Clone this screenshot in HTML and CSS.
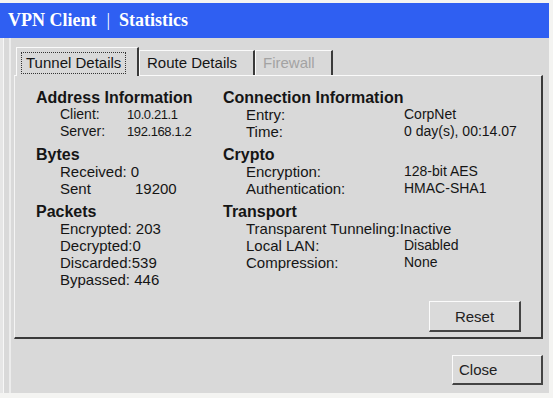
FILE: index.html
```html
<!DOCTYPE html>
<html>
<head>
<meta charset="utf-8">
<link rel="stylesheet" href="styles.css">
</head>
<body>
<div class="window">
  <div class="titlebar"><span>VPN Client</span><span class="sep">|</span><span>Statistics</span></div>
  <div class="client">
    <div class="tabs">
      <div class="tab active"><span class="focus">Tunnel Details</span></div>
      <div class="tab t2">Route Details</div>
      <div class="tab t3 disabled">Firewall</div>
    </div>
    <div class="panel">
      <div class="cols">
        <div class="col left">
          <div class="group">
            <div class="head">Address Information</div>
            <div class="row"><span class="lbl la small">Client:</span><span class="ip">10.0.21.1</span></div>
            <div class="row"><span class="lbl la small">Server:</span><span class="ip">192.168.1.2</span></div>
          </div>
          <div class="group">
            <div class="head">Bytes</div>
            <div class="row"><span>Received: 0</span></div>
            <div class="row"><span class="lbl lb">Sent</span><span class="num">19200</span></div>
          </div>
          <div class="group">
            <div class="head">Packets</div>
            <div class="row"><span>Encrypted: 203</span></div>
            <div class="row"><span>Decrypted:0</span></div>
            <div class="row"><span>Discarded:539</span></div>
            <div class="row"><span>Bypassed: 446</span></div>
          </div>
        </div>
        <div class="col right">
          <div class="group">
            <div class="head">Connection Information</div>
            <div class="row"><span class="lbl lr">Entry:</span><span class="val">CorpNet</span></div>
            <div class="row"><span class="lbl lr">Time:</span><span class="val">0 day(s), 00:14.07</span></div>
          </div>
          <div class="group">
            <div class="head">Crypto</div>
            <div class="row"><span class="lbl lr">Encryption:</span><span class="val">128-bit AES</span></div>
            <div class="row"><span class="lbl lr">Authentication:</span><span class="val">HMAC-SHA1</span></div>
          </div>
          <div class="group">
            <div class="head">Transport</div>
            <div class="row"><span>Transparent Tunneling:Inactive</span></div>
            <div class="row"><span class="lbl lr">Local LAN:</span><span class="val">Disabled</span></div>
            <div class="row"><span class="lbl lr">Compression:</span><span class="val">None</span></div>
          </div>
        </div>
      </div>
      <div class="panel-foot"><button class="btn reset">Reset</button></div>
    </div>
    <div class="foot"><button class="btn close">Close</button></div>
  </div>
</div>
</body>
</html>
```

FILE: styles.css
```css
* { box-sizing: border-box; }
html, body { margin: 0; padding: 0; }
body {
  width: 553px;
  height: 398px;
  background: #f4f4f2;
  font-family: "Liberation Sans", Arial, sans-serif;
  color: #151515;
  overflow: hidden;
}
.window {
  margin-top: 3px;
  width: 549px;
  height: 390px;
  display: flex;
  flex-direction: column;
}
.titlebar {
  height: 35px;
  background: #2f5ff2;
  color: #fff;
  font-family: "Liberation Serif", "Times New Roman", serif;
  font-weight: bold;
  font-size: 18px;
  line-height: 35px;
  padding-left: 8px;
  display: flex;
}
.titlebar .sep {
  font-weight: normal;
  margin: 0 9px 0 10px;
}
.client {
  flex: 1;
  background: #d9d9d9;
  padding: 9px 6px 8px 14px;
  display: flex;
  flex-direction: column;
  box-shadow: inset 3px 0 0 #e6e6e6, inset 4px 0 0 #f7f7f7, inset 9px 0 0 #d9d9d9, inset 11px 0 0 #ececec;
}
.tabs {
  height: 28px;
  display: flex;
  align-items: flex-end;
  padding-left: 2px;
}
.tab {
  height: 25px;
  background: #d9d9d9;
  border-top: 1px solid #fafafa;
  border-left: 1px solid #fafafa;
  border-right: 2px solid #3a3a3a;
  font-size: 15px;
  line-height: 23px;
  white-space: nowrap;
}
.tab.active {
  height: 29px;
  width: 123px;
  margin-bottom: -1px;
  position: relative;
  z-index: 1;
  padding: 3px 0 0 5px;
}
.focus {
  display: inline-block;
  outline: 1px dotted #333;
  padding: 0 4px;
  line-height: 20px;
}
.t2 { width: 116px; padding-left: 7px; }
.t3 { width: 78px; padding-left: 7px; }
.disabled { color: #a3a3a3; }
.panel {
  height: 264px;
  background: #d9d9d9;
  border-top: 1px solid #fafafa;
  border-left: 1px solid #f4f4f4;
  border-right: 2px solid #3a3a3a;
  border-bottom: 2px solid #3a3a3a;
  display: flex;
  flex-direction: column;
  padding: 13px 0 0 21px;
}
.cols { display: flex; }
.col.left { width: 187px; }
.group { margin-bottom: 6px; }
.head {
  font-weight: bold;
  font-size: 16px;
  line-height: 17px;
}
.row {
  display: flex;
  font-size: 15px;
  line-height: 17px;
  padding-left: 24px;
  white-space: nowrap;
}
.right .row { padding-left: 23px; }
.lbl { flex: none; }
.la { width: 67px; }
.small { font-size: 14px; }
.lb { width: 75px; }
.lr { width: 158px; }
.ip { font-size: 13px; letter-spacing: -0.4px; }
.num { font-size: 15px; }
.val { font-size: 14px; }
.panel-foot {
  margin-top: auto;
  display: flex;
  justify-content: flex-end;
  padding: 0 20px 5px 0;
}
.btn {
  font-family: "Liberation Sans", Arial, sans-serif;
  font-size: 15px;
  color: #222;
  background: #dadada;
  border-top: 1px solid #fbfbfb;
  border-left: 1px solid #fbfbfb;
  border-right: 2px solid #444;
  border-bottom: 2px solid #444;
  padding: 0;
  margin: 0;
}
.reset { width: 92px; height: 31px; }
.foot {
  margin-top: auto;
  display: flex;
  justify-content: flex-end;
}
.close { width: 91px; height: 30px; text-align: left; padding-left: 6px; }
```
